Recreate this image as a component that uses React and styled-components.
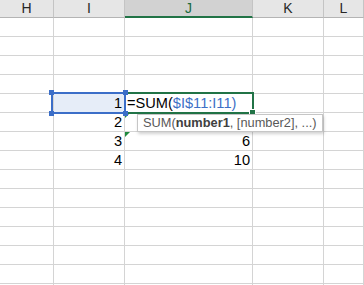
import React from 'react';
import styled, { createGlobalStyle, css } from 'styled-components';

const GlobalStyle = createGlobalStyle`
    html, body {
        margin: 0;
        padding: 0;
        background: #ffffff;
        overflow: hidden;
    }
`;

// Styles
const Sheet = styled.div`
    display: grid;
    grid-template-columns: 54px 71px 128px 71px 1fr;
    width: 364px;
    height: 285px;
    overflow: hidden;
    font-family: "Liberation Sans", Arial, sans-serif;
`;

const ColHead = styled.div`
    box-sizing: border-box;
    height: 18px;
    background-color: ${(p) => (p.active ? '#d2d2d2' : '#e6e6e6')};
    border-right: 1px solid #c4c4c4;
    border-bottom: ${(p) => (p.active ? '2px solid #217346' : '1px solid #b4b4b4')};
    color: ${(p) => (p.active ? '#1d6a3f' : '#262626')};
    font-size: 14px;
    line-height: 16px;
    text-align: center;
`;

const Cell = styled.div`
    position: relative;
    box-sizing: border-box;
    height: 19px;
    padding: 0 2px 1px 2px;
    display: flex;
    align-items: flex-end;
    justify-content: ${(p) => (p.left ? 'flex-start' : 'flex-end')};
    border-right: 1px solid #d4d4d4;
    border-bottom: 1px solid #d4d4d4;
    background-color: ${(p) => (p.refd ? '#e6edf8' : '#ffffff')};
    color: #000000;
    font-size: 14.6px;
    line-height: 15px;
    white-space: nowrap;
`;

const RefBox = styled.div`
    position: absolute;
    left: -3px;
    top: -2px;
    width: 75px;
    height: 22px;
    box-sizing: border-box;
    border: 2px solid #3b6ec8;
    z-index: 3;
    pointer-events: none;
`;

const Handle = styled.span`
    position: absolute;
    width: 5px;
    height: 5px;
    background: #3b6ec8;
    ${(p) => (p.top ? css`top: -4px;` : css`bottom: -4px;`)}
    ${(p) => (p.leftSide ? css`left: -4px;` : css`right: -4px;`)}
`;

const EditBox = styled.div`
    position: absolute;
    left: -1px;
    top: -2px;
    width: 130px;
    height: 22px;
    box-sizing: border-box;
    border: 2px solid #217346;
    z-index: 2;
    pointer-events: none;
`;

const FillHandle = styled.span`
    position: absolute;
    right: -3px;
    bottom: -3px;
    width: 5px;
    height: 5px;
    background: #217346;
    outline: 1px solid #ffffff;
`;

const Ref = styled.span`
    color: #3d6fc6;
`;

const Flag = styled.span`
    position: absolute;
    left: 0;
    top: 0;
    width: 0;
    height: 0;
    border-top: 5px solid #1f8a3f;
    border-right: 5px solid transparent;
`;

const Tip = styled.div`
    position: absolute;
    left: 12px;
    top: 1px;
    width: 186px;
    height: 18px;
    box-sizing: border-box;
    padding: 0 0 0 5px;
    background: #ffffff;
    border: 1px solid #c6c6c6;
    box-shadow: 1px 2px 3px rgba(0, 0, 0, 0.18);
    color: #595959;
    font-size: 12.8px;
    line-height: 16px;
    white-space: nowrap;
    z-index: 4;

    b {
        color: #404040;
    }
`;

const cols = ['H', 'I', 'J', 'K', 'L'];

const rows = [
    {}, {}, {}, {},
    { i: '1', edit: true },
    { i: '2', tip: true },
    { i: '3', j: '6', flag: true },
    { i: '4', j: '10' },
    {}, {}, {}, {}, {}, {}, {},
];

const Row = ({ r }) => (
    <>
        <Cell />
        <Cell refd={r.edit}>
            {r.i}
            {r.edit && (
                <RefBox>
                    <Handle top leftSide />
                    <Handle top />
                    <Handle leftSide />
                    <Handle />
                </RefBox>
            )}
        </Cell>
        <Cell left={r.edit}>
            {r.edit ? (
                <>
                    =SUM(<Ref>$I$11:I11)</Ref>
                    <EditBox><FillHandle /></EditBox>
                </>
            ) : r.j}
            {(r.tip || r.flag) && <Flag />}
            {r.tip && (
                <Tip>
                    SUM(<b>number1</b>, [number2], ...)
                </Tip>
            )}
        </Cell>
        <Cell />
        <Cell />
    </>
);

const App = () => {
    return (
        <>
            <GlobalStyle />
            <Sheet>
                {cols.map((c) => (
                    <ColHead key={c} active={c === 'J'}>{c}</ColHead>
                ))}
                {rows.map((r, idx) => (
                    <Row key={idx} r={r} />
                ))}
            </Sheet>
        </>
    );
};

export default App;
